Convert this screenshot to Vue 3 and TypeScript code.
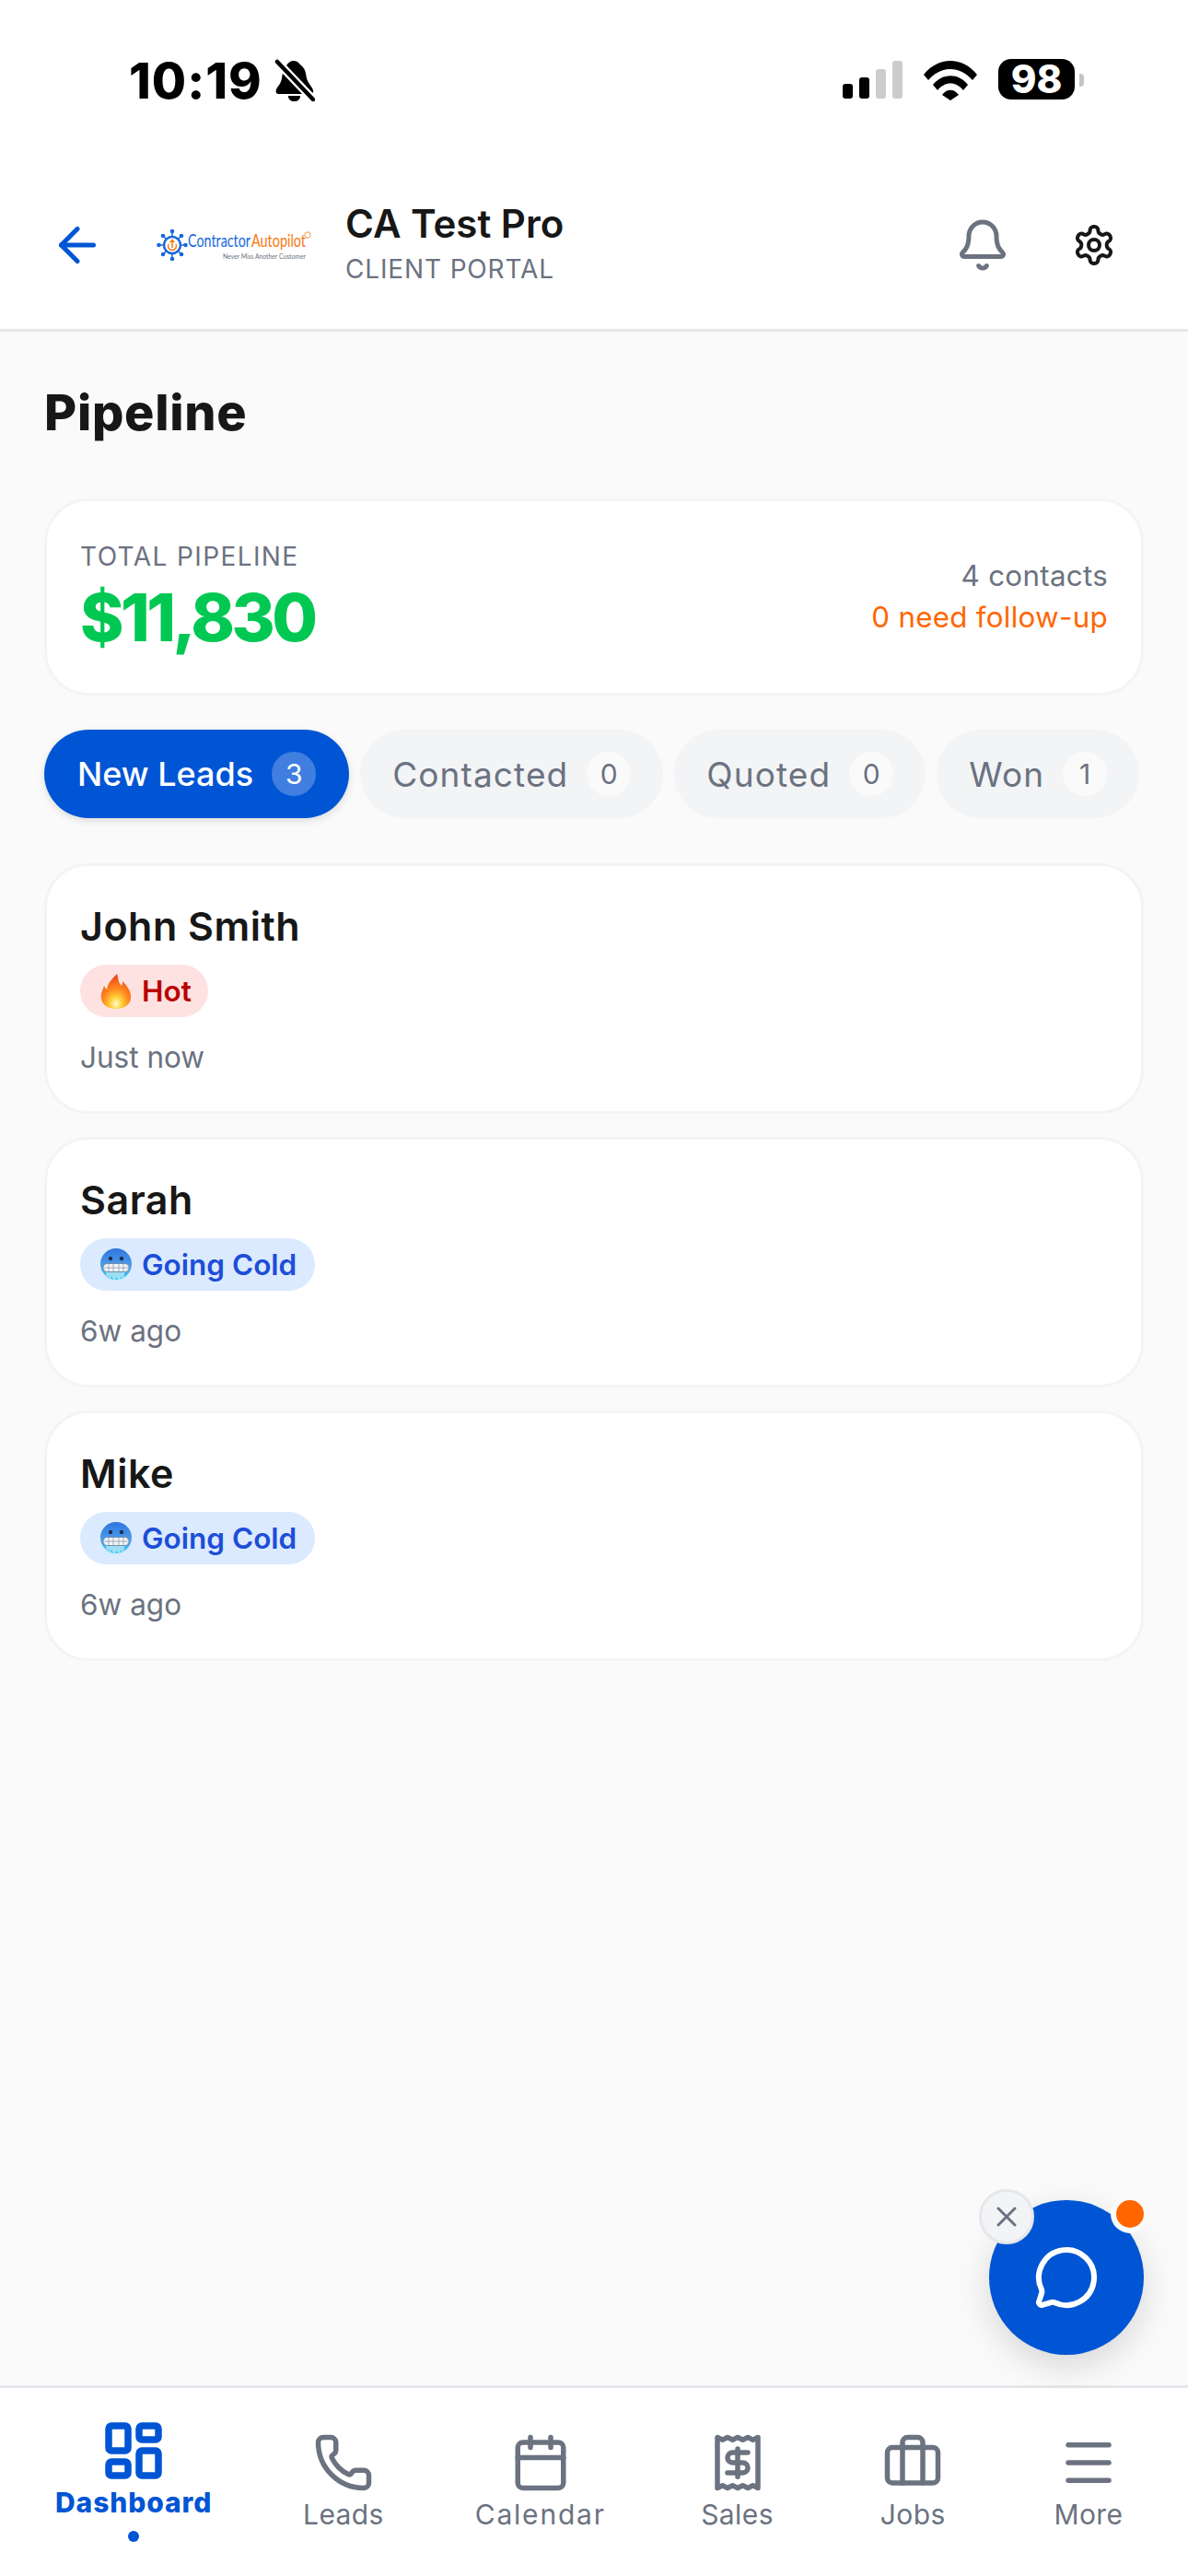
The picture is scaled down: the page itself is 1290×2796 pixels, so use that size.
<script setup lang="ts">
interface Tab { label: string; count: number; active?: boolean }
interface Lead { name: string; temp: 'hot' | 'cold'; label: string; time: string }

const tabs: Tab[] = [
  { label: 'New Leads', count: 3, active: true },
  { label: 'Contacted', count: 0 },
  { label: 'Quoted', count: 0 },
  { label: 'Won', count: 1 }
]

const leads: Lead[] = [
  { name: 'John Smith', temp: 'hot', label: 'Hot', time: 'Just now' },
  { name: 'Sarah', temp: 'cold', label: 'Going Cold', time: '6w ago' },
  { name: 'Mike', temp: 'cold', label: 'Going Cold', time: '6w ago' }
]
</script>

<template>
  <div class="app">
    <header class="top">
      <div class="status">
        <div class="status-left">
          <span class="time">10:19</span>
          <svg class="muted" viewBox="0 0 44 46" width="44" height="46">
            <path d="M21 2c4 0 6 3 8 5 5 4 5 9 6 14 1 5 6 9 7 13 .5 3-1 4-4 4H5c-3 0-4-2-3-5 2-4 5-6 6-12 1-5 1-10 5-14 2-3 4-5 8-5z" fill="#000" />
            <path d="M15 40h13c0 4-3 6-6.500 6S15 44 15 40z" fill="#000" />
            <path d="M3 3l39 41" stroke="#fff" stroke-width="9" />
            <path d="M3 3l39 41" stroke="#000" stroke-width="4.500" stroke-linecap="round" />
          </svg>
        </div>
        <div class="status-right">
          <div class="signal">
            <i class="b1"></i><i class="b2"></i><i class="b3 off"></i><i class="b4 off"></i>
          </div>
          <svg class="wifi" viewBox="0 0 58 44" width="58" height="44">
            <path d="M0 16C16 -4 42 -4 58 16l-5 6C39 6 19 6 5 22z" fill="#000" />
            <path d="M10 27C20 14 38 14 48 27l-5 6C35 23 23 23 15 33z" fill="#000" />
            <path d="M20 38C25 31 33 31 38 38l-9 6z" fill="#000" />
          </svg>
          <div class="battery"><span>98</span></div>
          <div class="battery-tip"></div>
        </div>
      </div>

      <div class="bar">
        <svg class="ico back" viewBox="0 0 24 24" width="60" height="60"><path d="m12 19-7-7 7-7" /><path d="M19 12H5" /></svg>
        <svg class="logo" viewBox="0 0 170 42" width="170" height="42">
          <g transform="translate(0 3)">
            <g fill="#1668dc">
              <circle cx="16" cy="3" r="2.300" /><circle cx="16" cy="33" r="2.300" />
              <circle cx="1.500" cy="18" r="2.300" /><circle cx="30.500" cy="18" r="2.300" />
              <circle cx="6" cy="8" r="2.300" /><circle cx="26" cy="8" r="2.300" />
              <circle cx="6" cy="28" r="2.300" /><circle cx="26" cy="28" r="2.300" />
            </g>
            <g stroke="#1668dc" stroke-width="1.500">
              <path d="M16 3v30M1.500 18h29M6 8l20 20M26 8L6 28" />
            </g>
            <circle cx="16" cy="18" r="9" fill="#fff" stroke="#1668dc" stroke-width="2.500" />
            <path d="M12 17a4.500 4.500 0 1 0 8 0M16 21v-8M13.500 15l2.500-2.500 2.500 2.500" fill="none" stroke="#f7780f" stroke-width="1.500" />
            <circle cx="163" cy="7" r="3.200" fill="none" stroke="#f7780f" stroke-width=".8" />
          </g>
          <text x="33" y="23" class="logo-main" fill="#1668dc" textLength="68" lengthAdjust="spacingAndGlyphs">Contractor</text>
          <text x="102" y="23" class="logo-main" fill="#f7780f" textLength="59" lengthAdjust="spacingAndGlyphs">Autopilot</text>
          <text x="71" y="36" class="logo-sub" textLength="90" lengthAdjust="spacingAndGlyphs">Never Miss Another Customer</text>
        </svg>
        <div class="who">
          <div class="who-name">CA Test Pro</div>
          <div class="who-sub">CLIENT PORTAL</div>
        </div>
        <svg class="ico bell" viewBox="0 0 24 24" width="60" height="60">
          <path d="M10.268 21a2 2 0 0 0 3.464 0" />
          <path d="M3.262 15.326A1 1 0 0 0 4 17h16a1 1 0 0 0 .74-1.673C19.410 13.956 18 12.499 18 8A6 6 0 0 0 6 8c0 4.499-1.411 5.956-2.738 7.326" />
        </svg>
        <svg class="ico gear" viewBox="0 0 24 24" width="48" height="48">
          <path d="M12.220 2h-.44a2 2 0 0 0-2 2v.18a2 2 0 0 1-1 1.730l-.43.25a2 2 0 0 1-2 0l-.15-.08a2 2 0 0 0-2.730.73l-.22.38a2 2 0 0 0 .73 2.730l.15.1a2 2 0 0 1 1 1.720v.51a2 2 0 0 1-1 1.740l-.15.09a2 2 0 0 0-.73 2.730l.22.38a2 2 0 0 0 2.730.73l.15-.08a2 2 0 0 1 2 0l.43.25a2 2 0 0 1 1 1.730V20a2 2 0 0 0 2 2h.44a2 2 0 0 0 2-2v-.18a2 2 0 0 1 1-1.730l.43-.25a2 2 0 0 1 2 0l.15.08a2 2 0 0 0 2.730-.73l.22-.39a2 2 0 0 0-.73-2.730l-.15-.08a2 2 0 0 1-1-1.740v-.5a2 2 0 0 1 1-1.740l.15-.09a2 2 0 0 0 .73-2.730l-.22-.38a2 2 0 0 0-2.730-.73l-.15.08a2 2 0 0 1-2 0l-.43-.25a2 2 0 0 1-1-1.730V4a2 2 0 0 0-2-2z" />
          <circle cx="12" cy="12" r="3" />
        </svg>
      </div>
    </header>

    <main class="main">
      <h1 class="title">Pipeline</h1>

      <section class="card total">
        <div class="total-left">
          <div class="total-label">TOTAL PIPELINE</div>
          <div class="total-value">$11,830</div>
        </div>
        <div class="total-right">
          <div class="contacts">4 contacts</div>
          <div class="follow">0 need follow-up</div>
        </div>
      </section>

      <div class="tabs">
        <div v-for="t in tabs" :key="t.label" class="tab" :class="{ active: t.active }">
          <span>{{ t.label }}</span>
          <span class="count">{{ t.count }}</span>
        </div>
      </div>

      <div class="leads">
        <article v-for="l in leads" :key="l.name" class="card lead">
          <div class="lead-name">{{ l.name }}</div>
          <div class="chip" :class="l.temp">
            <svg v-if="l.temp === 'hot'" class="emoji" viewBox="0 0 36 38" width="36" height="38">
              <defs>
                <radialGradient id="fire" cx="50%" cy="85%" r="85%">
                  <stop offset="0" stop-color="#fffbd0" />
                  <stop offset=".22" stop-color="#ffd23c" />
                  <stop offset=".5" stop-color="#ff8a1e" />
                  <stop offset="1" stop-color="#e8401c" />
                </radialGradient>
              </defs>
              <path d="M19 0c2 6 1 9 5 13 1-2 1-4 1-5 6 6 10 12 9 19-1 7-8 11-16 11S3 34 2 27c-1-6 2-10 3-14 1 2 2 3 3 4 1-7 6-12 11-17z" fill="url(#fire)" />
            </svg>
            <svg v-else class="emoji" viewBox="0 0 36 38" width="36" height="38">
              <defs>
                <linearGradient id="cold" x1="0" y1="0" x2="0" y2="1">
                  <stop offset="0" stop-color="#2f76de" />
                  <stop offset=".6" stop-color="#4f9eea" />
                  <stop offset="1" stop-color="#2fd0f2" />
                </linearGradient>
              </defs>
              <circle cx="18" cy="18" r="17" fill="url(#cold)" />
              <circle cx="12" cy="12" r="2.200" fill="#1c2f52" />
              <circle cx="24" cy="12" r="2.200" fill="#1c2f52" />
              <rect x="4" y="17.500" width="28" height="9" rx="4.500" fill="#f2f5f8" stroke="#6a7f95" stroke-width=".8" />
              <path d="M5 22h26M10 18v8M15 18v8M21 18v8M26 18v8" stroke="#8d9cab" stroke-width=".8" />
              <path d="M7 27l1 10 1.500-7 2 7 1-6 4 5 2-4 3 5 2-6 2 5 2-9z" fill="#aee4f4" opacity=".85" />
            </svg>
            <span>{{ l.label }}</span>
          </div>
          <div class="lead-time">{{ l.time }}</div>
        </article>
      </div>
    </main>

    <nav class="nav">
      <div class="nav-item active">
        <svg class="ico dash" viewBox="0 0 24 24" width="72" height="72">
          <rect x="3" y="3" width="7" height="9" rx="1" /><rect x="14" y="3" width="7" height="5" rx="1" />
          <rect x="14" y="12" width="7" height="9" rx="1" /><rect x="3" y="16" width="7" height="5" rx="1" />
        </svg>
        <span class="nav-label">Dashboard</span>
        <i class="nav-dot"></i>
      </div>
      <div class="nav-item">
        <svg class="ico" viewBox="0 0 24 24" width="66" height="66">
          <path d="M13.832 16.568a1 1 0 0 0 1.213-.303l.355-.465A2 2 0 0 1 17 15h3a2 2 0 0 1 2 2v3a2 2 0 0 1-2 2A18 18 0 0 1 2 4a2 2 0 0 1 2-2h3a2 2 0 0 1 2 2v3a2 2 0 0 1-.8 1.600l-.468.351a1 1 0 0 0-.292 1.233 14 14 0 0 0 6.392 6.384" />
        </svg>
        <span class="nav-label">Leads</span>
      </div>
      <div class="nav-item wide">
        <svg class="ico" viewBox="0 0 24 24" width="66" height="66">
          <path d="M8 2v4" /><path d="M16 2v4" /><rect x="3" y="4" width="18" height="18" rx="2" /><path d="M3 10h18" />
        </svg>
        <span class="nav-label">Calendar</span>
      </div>
      <div class="nav-item">
        <svg class="ico" viewBox="0 0 24 24" width="66" height="66">
          <path d="M4 2v20l2-1 2 1 2-1 2 1 2-1 2 1 2-1 2 1V2l-2 1-2-1-2 1-2-1-2 1-2-1-2 1Z" />
          <path d="M16 8h-6a2 2 0 1 0 0 4h4a2 2 0 1 1 0 4H8" /><path d="M12 17.500v-11" />
        </svg>
        <span class="nav-label">Sales</span>
      </div>
      <div class="nav-item">
        <svg class="ico" viewBox="0 0 24 24" width="66" height="66">
          <path d="M16 20V4a2 2 0 0 0-2-2h-4a2 2 0 0 0-2 2v16" /><rect x="2" y="6" width="20" height="14" rx="2" />
        </svg>
        <span class="nav-label">Jobs</span>
      </div>
      <div class="nav-item">
        <svg class="ico" viewBox="0 0 24 24" width="66" height="66">
          <path d="M4 5h16" /><path d="M4 12h16" /><path d="M4 19h16" />
        </svg>
        <span class="nav-label">More</span>
      </div>
    </nav>

    <div class="fab">
      <svg class="ico chat" viewBox="0 0 24 24" width="72" height="72">
        <path d="M2.992 16.342a2 2 0 0 1 .094 1.167l-1.065 3.290a1 1 0 0 0 1.236 1.168l3.413-.998a2 2 0 0 1 1.099.092 10 10 0 1 0-4.777-4.719" />
      </svg>
      <i class="fab-dot"></i>
      <div class="fab-close">
        <svg class="ico" viewBox="0 0 24 24" width="36" height="36"><path d="M18 6 6 18" /><path d="m6 6 12 12" /></svg>
      </div>
    </div>
  </div>
</template>

<style>
html, body { margin: 0; background: #fafafa; }
</style>

<style scoped>
* { box-sizing: border-box; }
.app {
  position: relative;
  width: 1290px;
  height: 2796px;
  display: flex;
  flex-direction: column;
  background: #fafafa;
  font-family: Inter, "Open Sans", sans-serif;
  color: #171717;
  overflow: hidden;
}
.ico { fill: none; stroke: currentColor; stroke-width: 2; stroke-linecap: round; stroke-linejoin: round; flex: none; display: block; }

.top { background: #fff; border-bottom: 3px solid #e5e7eb; height: 360px; }
.status { display: flex; justify-content: space-between; height: 174px; padding: 58px 113px 0 140px; }
.status-left { display: flex; align-items: flex-start; gap: 13px; }
.time { font-size: 54px; font-weight: 800; letter-spacing: 1px; line-height: 60px; color: #000; }
.muted { margin-top: 6px; }
.status-right { display: flex; align-items: flex-start; height: 50px; }
.signal { display: flex; align-items: flex-end; gap: 7px; height: 41px; margin-top: 8px; }
.signal i { display: block; width: 11px; border-radius: 3px; background: #000; }
.signal .b1 { height: 16px; }
.signal .b2 { height: 23px; }
.signal .b3 { height: 32px; }
.signal .b4 { height: 41px; }
.signal .off { background: #ccc; }
.wifi { margin: 7px 23px 0 23px; }
.battery { width: 83px; height: 44px; margin-top: 6px; background: #000; border-radius: 14px; color: #fff; font-size: 42px; font-weight: 800; line-height: 44px; text-align: center; }
.battery-tip { width: 5px; height: 14px; margin: 22px 0 0 5px; background: #c4c4c4; border-radius: 0 4px 4px 0; }

.bar { display: flex; align-items: center; height: 183px; padding: 0 48px 0 54px; }
.back { color: #0055d4; }
.logo { margin-left: 57px; overflow: visible; }
.logo-main { font-family: Lato, sans-serif; font-size: 19px; }
.logo-sub { font-family: Lato, sans-serif; font-size: 8px; fill: #6b7280; }
.who { margin: 0 0 4px 34px; flex: 1; }
.who-name { font-size: 42px; font-weight: 600; line-height: 52px; color: #171717; }
.who-sub { margin-top: 4px; font-size: 28px; line-height: 38px; color: #6b7280; letter-spacing: .85px; }
.bell { color: #6b7280; }
.gear { color: #171717; margin: 0 30px 0 67px; }

.main { flex: 1; padding: 0 48px; }
.title { margin: 55px 0 0; font-size: 54px; line-height: 66px; font-weight: 800; letter-spacing: .7px; color: #171717; }
.card { background: #fff; border: 3px solid #f3f4f6; border-radius: 48px; }
.total { display: flex; justify-content: space-between; align-items: center; height: 214px; margin-top: 60px; padding: 0 36px 0 36px; }
.total-left { padding-top: 4px; }
.total-label { font-size: 28px; line-height: 36px; letter-spacing: 1.400px; color: #6b7280; margin-bottom: 4px; }
.total-value { font-size: 72px; line-height: 88px; font-weight: 800; letter-spacing: -3.500px; color: #00c853; }
.total-right { text-align: right; font-size: 31.300px; letter-spacing: .3px; line-height: 45px; }
.contacts { color: #6b7280; }
.follow { color: #f60; }

.tabs { display: flex; gap: 12px; margin-top: 37px; }
.tab { display: flex; align-items: center; height: 96px; padding: 0 35px; border-radius: 48px; background: #f3f4f6; color: #6b7280; font-size: 37px; letter-spacing: 1.100px; gap: 20px; white-space: nowrap; }
.tab.active { padding: 0 36px; background: #0055d4; color: #fff; font-size: 36px; font-weight: 500; letter-spacing: 0; box-shadow: 0 3px 9px rgba(0, 0, 0, .12); }
.count { width: 48px; height: 48px; border-radius: 50%; background: #fafafa; display: flex; align-items: center; justify-content: center; font-size: 30px; font-weight: 400; letter-spacing: 0; }
.tab.active .count { background: rgba(255, 255, 255, .25); }

.leads { display: flex; flex-direction: column; gap: 25px; margin-top: 49px; }
.lead { height: 272px; padding: 39px 36px 0; }
.lead-name { font-size: 43px; letter-spacing: .5px; line-height: 52px; font-weight: 600; color: #171717; }
.chip { display: inline-flex; align-items: center; height: 57px; margin: 16px 0 0; padding: 0 20px 0 21px; border-radius: 29px; font-size: 31.500px; font-weight: 600; gap: 10px; }
.chip.cold { background: #dbeafe; color: #1d4ed8; }
.chip.hot { background: #fee2e2; color: #b90000; padding-right: 18px; }
.lead-time { margin-top: 26px; font-size: 31.500px; line-height: 36px; color: #6b7280; }

.nav { display: flex; justify-content: space-between; height: 207px; padding: 0 60px; background: #fff; border-top: 3px solid #e5e7eb; }
.nav-item { position: relative; display: flex; flex-direction: column; align-items: center; min-width: 96px; padding-top: 48px; color: #6b7280; }
.nav-label { font-size: 30px; letter-spacing: .4px; line-height: 36px; margin-top: 5px; white-space: nowrap; }
.nav-item.wide { min-width: 142px; }
.nav-item.wide .nav-label { letter-spacing: 1.800px; }
.nav-item.active { color: #0055d4; padding-top: 32px; min-width: 170px; }
.nav-item.active .nav-label { font-weight: 800; margin-top: 2px; letter-spacing: .9px; }
.dash { stroke-width: 2.500; }
.nav-dot { position: absolute; left: 50%; top: 155px; width: 12px; height: 12px; margin-left: -6px; border-radius: 50%; background: #0055d4; }

.fab { position: absolute; left: 1074px; top: 2388px; width: 168px; height: 168px; border-radius: 50%; background: #0055d4; color: #fff; display: flex; align-items: center; justify-content: center; box-shadow: 0 12px 36px rgba(0, 0, 0, .14); }
.fab-dot { position: absolute; right: 0; top: 0; width: 42px; height: 42px; margin: -6px -6px 0 0; border-radius: 50%; background: #f60; border: 6px solid #fafafa; }
.fab-close { position: absolute; left: -11px; top: -12px; width: 60px; height: 60px; border-radius: 50%; background: #f3f4f6; border: 3px solid #e5e7eb; color: #6b7280; display: flex; align-items: center; justify-content: center; }
</style>
